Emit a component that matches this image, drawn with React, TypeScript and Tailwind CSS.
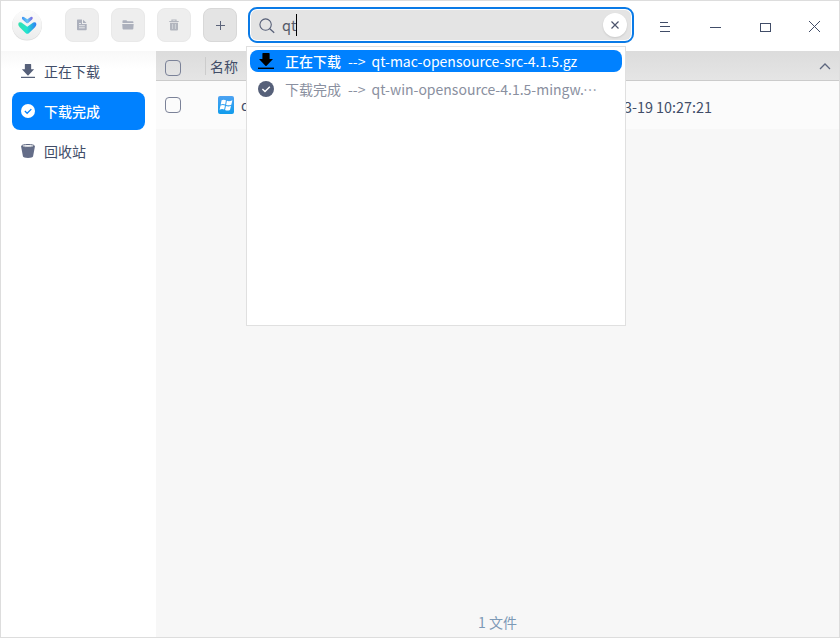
import type { ReactNode } from "react";

function Logo() {
  return (
    <svg width="32" height="32" viewBox="0 0 32 32" className="block">
      <defs>
        <linearGradient id="disc" x1="0" y1="0" x2="0" y2="1">
          <stop offset="0" stopColor="#fcfcfc" />
          <stop offset="1" stopColor="#ececec" />
        </linearGradient>
        <linearGradient id="big" x1="0" y1="0" x2="1" y2="0">
          <stop offset="0" stopColor="#35dfae" />
          <stop offset="0.45" stopColor="#22e6cc" />
          <stop offset="1" stopColor="#2f7cf6" />
        </linearGradient>
        <linearGradient id="small" x1="0" y1="0" x2="1" y2="0">
          <stop offset="0" stopColor="#3f90f5" />
          <stop offset="0.5" stopColor="#62c8f4" />
          <stop offset="1" stopColor="#7a5fe0" />
        </linearGradient>
      </defs>
      <circle cx="16" cy="16.6" r="15" fill="#dcdcdc" />
      <circle cx="16" cy="16" r="14.8" fill="url(#disc)" />
      <path d="M7.3 15.3 Q7.3 12.4 10.4 13.6 L16.3 17.8 L22.2 13.6 Q25.3 12.4 25.4 15.3 Q25.3 17 24 18.2 L17.8 24.2 Q16.3 25.3 14.8 24.2 L8.7 18.2 Q7.3 17 7.3 15.3 Z" fill="url(#big)" />
      <path d="M10.9 9 Q11 7.2 12.9 7.9 L16.3 10.3 L19.7 7.9 Q21.6 7.2 21.7 9 Q21.6 10 20.8 10.8 L17.2 14 Q16.3 14.6 15.4 14 L11.8 10.8 Q10.9 10 10.9 9 Z" fill="url(#small)" />
    </svg>
  );
}

function ToolButton({ children, active }: { children: ReactNode; active?: boolean }) {
  return (
    <div
      className={
        "flex h-[34px] w-[34px] items-center justify-center rounded-lg border " +
        (active ? "border-[#d8d8d8] bg-[#e4e4e4]" : "border-[#e9e9e9] bg-[#eeeeee]")
      }
    >
      {children}
    </div>
  );
}

function DownloadIcon({ size, color }: { size: number; color: string }) {
  return (
    <svg width={size} height={size} viewBox="0 0 16 16" className="block shrink-0" fill={color}>
      <path d="M4.4 0.6 Q4.4 0 5 0 H11 Q11.6 0 11.6 0.6 V6 H15 L8.6 12.8 Q8 13.3 7.4 12.8 L1 6 H4.4 Z" />
      <rect x="0" y="14.6" width="16" height="1.4" />
    </svg>
  );
}

function CheckDisc({ size, fill, mark }: { size: number; fill: string; mark: string }) {
  return (
    <svg width={size} height={size} viewBox="0 0 16 16" className="block shrink-0">
      <circle cx="8" cy="8" r="8" fill={fill} />
      <path d="M4.4 8 L7 10.6 L11.8 5.8" fill="none" stroke={mark} strokeWidth="1.4" />
    </svg>
  );
}

function BinIcon() {
  return (
    <svg width="14" height="14" viewBox="0 0 14 14" className="block shrink-0">
      <path d="M0 2 L2 12.6 Q2.4 14 7 14 Q11.6 14 12 12.6 L14 2 Z" fill="#646d88" />
      <ellipse cx="7" cy="1.9" rx="6.4" ry="1.4" fill="#f5f6f8" stroke="#5a637d" strokeWidth="1" />
    </svg>
  );
}

function Checkbox() {
  return <div className="h-4 w-4 rounded-[4px] border-[1.5px] border-[#7b8298]" />;
}

function TopBar() {
  return (
    <header className="flex h-[50px] shrink-0 bg-white">
      <div className="ml-[10px] mt-2">
        <Logo />
      </div>
      <div className="ml-[22px] mt-[7px] flex gap-3">
        <ToolButton>
          <svg width="10" height="12" viewBox="0 0 10 12">
            <path d="M0 1 Q0 0.5 0.7 0.5 H5 V5 H9.7 V10.3 Q9.7 11.2 9 11.2 H0.8 Q0 11.2 0 10.3 Z M6 0.8 L9.5 4.1 H6 Z" fill="#acb0bc" />
            <path d="M2 6.7 H7.8 M2 8.8 H7.8" stroke="#e6e7ea" strokeWidth="1" />
            <path d="M2 4.5 H4" stroke="#e6e7ea" strokeWidth="1" />
          </svg>
        </ToolButton>
        <ToolButton>
          <svg width="12" height="10" viewBox="0 0 12 10">
            <path d="M0.5 3 V1 Q0.5 0.3 1.2 0.3 H4.4 L5.4 1.3 H10.6 Q11.4 1.3 11.4 2 V3 Z" fill="#acb0bc" />
            <path d="M0.2 3.9 H11.7 L11.3 8.8 Q11.2 9.6 10.5 9.6 H1.4 Q0.7 9.6 0.6 8.8 Z" fill="#acb0bc" />
          </svg>
        </ToolButton>
        <ToolButton>
          <svg width="10" height="12" viewBox="0 0 10 12">
            <path d="M0.3 2.5 H9.7 M3 2 V1 H7 V2" fill="none" stroke="#b2b5be" strokeWidth="1.2" />
            <path d="M1 3.8 H9 V10.4 Q9 11.4 8 11.4 H2 Q1 11.4 1 10.4 Z" fill="#b2b5be" />
            <path d="M3.6 5 V10 M6.4 5 V10" stroke="#d8dade" strokeWidth="0.8" />
          </svg>
        </ToolButton>
        <ToolButton active>
          <svg width="9" height="9" viewBox="0 0 9 9" className="ml-px mt-px" shapeRendering="crispEdges">
            <path d="M4.5 0 V9 M0 4.5 H9" stroke="#5c647a" strokeWidth="1" />
          </svg>
        </ToolButton>
      </div>
      <div className="ml-[11px] mt-[6px] h-9 w-[386px] rounded-[9px] border-2 border-[#0a7ae6] p-px">
        <div className="flex h-full items-center rounded-md bg-[#e4e4e4]">
          <svg width="16" height="16" viewBox="0 0 16 16" className="ml-2 mt-px shrink-0">
            <circle cx="6.6" cy="6.6" r="5.7" fill="none" stroke="#565f77" strokeWidth="1.1" />
            <path d="M10.8 10.8 L15.2 14.8" stroke="#565f77" strokeWidth="1.2" />
          </svg>
          <span className="ml-[7px] text-[14.5px] leading-[22px] text-[#555a68]">qt</span>
          <span className="h-[22px] w-px bg-black" />
          <div className="ml-auto mr-[4px] flex h-6 w-6 items-center justify-center rounded-full bg-white shadow-[0_1px_2px_rgba(0,0,0,0.12)]">
            <svg width="8" height="8" viewBox="0 0 8 8">
              <path d="M0.5 0.5 L7.5 7.5 M7.5 0.5 L0.5 7.5" stroke="#4c546c" strokeWidth="1.2" />
            </svg>
          </div>
        </div>
      </div>
      <div className="ml-[26px] mt-5 flex gap-[38px] text-[#414d68]">
        <svg width="12" height="13" viewBox="0 0 12 13" stroke="currentColor" shapeRendering="crispEdges">
          <path d="M0 1.5 H8 M0 5.5 H10 M0 10.5 H10" />
        </svg>
        <svg width="12" height="13" viewBox="0 0 12 13" stroke="currentColor" shapeRendering="crispEdges">
          <path d="M0 6.5 H11" />
        </svg>
        <svg width="12" height="13" viewBox="0 0 12 13" fill="none" stroke="currentColor" shapeRendering="crispEdges">
          <rect x="0.5" y="2.5" width="10" height="8" />
        </svg>
        <svg width="12" height="13" viewBox="0 0 12 13" stroke="currentColor" className="-ml-px">
          <path d="M0 0 L11 11 M11 0 L0 11" strokeWidth="1" />
        </svg>
      </div>
    </header>
  );
}

function Sidebar() {
  return (
    <nav className="flex w-[155px] shrink-0 flex-col gap-0.5 bg-white bg-linear-to-b from-[#f8f8f8] to-white to-[18px] pl-[11px] pr-[11px] pt-[1px] text-[14px] text-[#414d68]">
      <div className="flex h-[38px] items-center gap-[9px] pl-[9px]">
        <DownloadIcon size={14} color="#566079" />
        <span>正在下载</span>
      </div>
      <div className="flex h-[38px] items-center gap-[9px] rounded-lg bg-[#0081ff] pl-[9px] font-medium text-white">
        <CheckDisc size={14} fill="#ffffff" mark="#0081ff" />
        <span>下载完成</span>
      </div>
      <div className="flex h-[38px] items-center gap-[9px] pl-[9px]">
        <BinIcon />
        <span>回收站</span>
      </div>
    </nav>
  );
}

function FileTable() {
  return (
    <main className="flex min-w-0 flex-1 flex-col bg-[#f7f7f7] text-[14px] text-[#414d68]">
      <div className="flex h-[30px] shrink-0 items-center border-b border-[#cbcbcb] bg-linear-to-b from-[#dcdcdc] to-[#e5e5e5] pl-[9px] pr-2">
        <div className="mt-[5px]">
          <Checkbox />
        </div>
        <div className="ml-6 h-[18px] w-px bg-[#cccccc]" />
        <span className="ml-1">名称</span>
        <svg width="12" height="7" viewBox="0 0 12 7" className="ml-auto mt-px">
          <path d="M1 6 L6 1 L11 6" fill="none" stroke="#5d667e" strokeWidth="1.3" />
        </svg>
      </div>
      <div className="flex h-12 shrink-0 items-center bg-[#fbfbfb] pl-[9px]">
        <Checkbox />
        <svg width="16" height="18" viewBox="0 0 16 18" className="ml-[37px] shrink-0">
          <defs>
            <linearGradient id="win" x1="0" y1="0" x2="0" y2="1">
              <stop offset="0" stopColor="#4da2f2" />
              <stop offset="1" stopColor="#109cec" />
            </linearGradient>
          </defs>
          <rect width="16" height="18" rx="2" fill="url(#win)" />
          <path
            d="M3.6 4.2 Q5.8 3.2 7.9 4.3 L7.2 8.4 Q5 7.4 2.7 8.4 Z M8.9 4.8 Q11 5.9 14.4 4.3 L13.3 8.7 Q10.4 9.9 8.1 8.9 Z M2.5 9.4 Q4.8 8.4 7 9.4 L6.2 13.6 Q4 12.6 1.6 13.7 Z M7.9 9.9 Q10.2 10.9 13 9.8 L12 13.9 Q9.4 15.2 7.1 14.1 Z"
            fill="#ffffff"
          />
        </svg>
        <span className="ml-[7px] w-[20px] overflow-hidden whitespace-nowrap">qt</span>
        <span className="ml-[318px] mt-[3px] whitespace-nowrap text-[14.4px]">2021-03-19 10:27:21</span>
      </div>
      <div className="mb-[5px] mt-auto text-center text-[#7c99b6]">1 文件</div>
    </main>
  );
}

function SearchResults() {
  return (
    <div className="absolute left-[245px] top-[45px] h-[280px] w-[380px] border border-[#e0e0e0] bg-white p-[3px] text-[14px]">
      <div className="flex h-[22px] items-center rounded-lg bg-[#0081ff] pl-2 text-white">
        <DownloadIcon size={16} color="#000000" />
        <span className="ml-[11px] font-medium">正在下载</span>
        <span className="ml-[7px]">--&gt;</span>
        <span className="ml-[6px]">qt-mac-opensource-src-4.1.5.gz</span>
      </div>
      <div className="mt-1.5 flex h-[22px] items-center pl-2 text-[#8a90a0]">
        <CheckDisc size={16} fill="#566079" mark="#ffffff" />
        <span className="ml-[11px]">下载完成</span>
        <span className="ml-[7px]">--&gt;</span>
        <span className="ml-[6px]">qt-win-opensource-4.1.5-mingw.</span>
        <span lang="zh-CN" className="-ml-px">⋯</span>
      </div>
    </div>
  );
}

export default function App() {
  return (
    <div className="relative flex h-[638px] w-[840px] flex-col overflow-hidden border border-[#dddddd] bg-white font-['Noto_Sans_CJK_SC',sans-serif] leading-5">
      <TopBar />
      <div className="flex min-h-0 flex-1">
        <Sidebar />
        <FileTable />
      </div>
      <SearchResults />
    </div>
  );
}
